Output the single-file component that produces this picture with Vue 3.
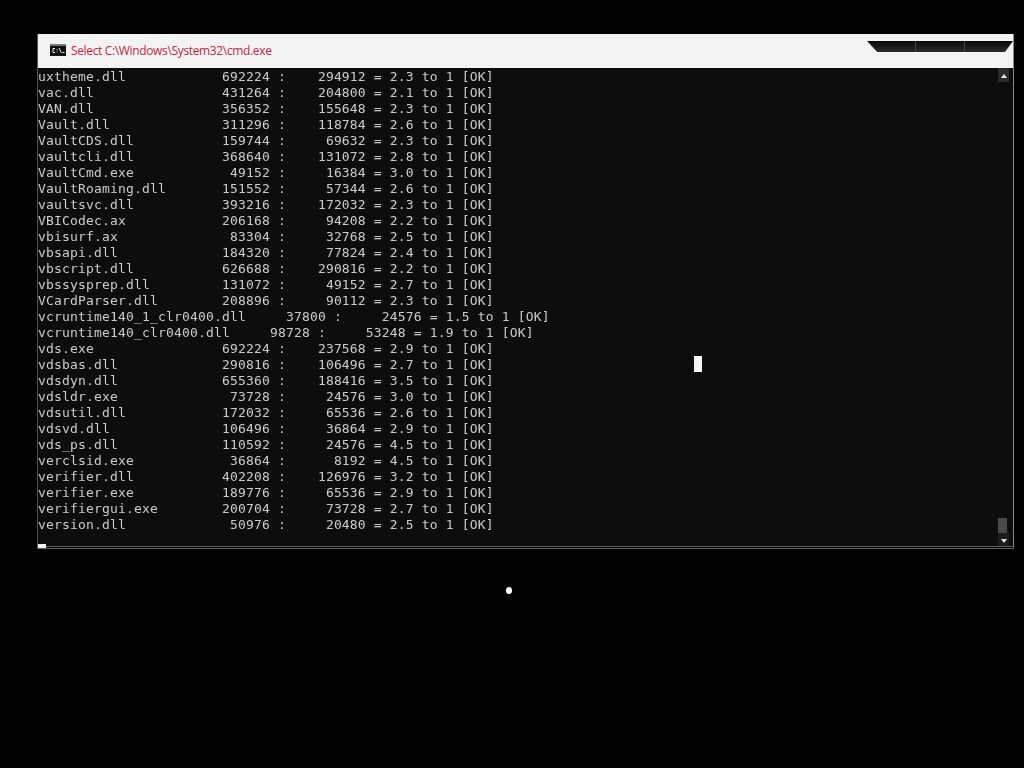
<script setup>
const lines = [
  'uxtheme.dll            692224 :    294912 = 2.3 to 1 [OK]',
  'vac.dll                431264 :    204800 = 2.1 to 1 [OK]',
  'VAN.dll                356352 :    155648 = 2.3 to 1 [OK]',
  'Vault.dll              311296 :    118784 = 2.6 to 1 [OK]',
  'VaultCDS.dll           159744 :     69632 = 2.3 to 1 [OK]',
  'vaultcli.dll           368640 :    131072 = 2.8 to 1 [OK]',
  'VaultCmd.exe            49152 :     16384 = 3.0 to 1 [OK]',
  'VaultRoaming.dll       151552 :     57344 = 2.6 to 1 [OK]',
  'vaultsvc.dll           393216 :    172032 = 2.3 to 1 [OK]',
  'VBICodec.ax            206168 :     94208 = 2.2 to 1 [OK]',
  'vbisurf.ax              83304 :     32768 = 2.5 to 1 [OK]',
  'vbsapi.dll             184320 :     77824 = 2.4 to 1 [OK]',
  'vbscript.dll           626688 :    290816 = 2.2 to 1 [OK]',
  'vbssysprep.dll         131072 :     49152 = 2.7 to 1 [OK]',
  'VCardParser.dll        208896 :     90112 = 2.3 to 1 [OK]',
  'vcruntime140_1_clr0400.dll     37800 :     24576 = 1.5 to 1 [OK]',
  'vcruntime140_clr0400.dll     98728 :     53248 = 1.9 to 1 [OK]',
  'vds.exe                692224 :    237568 = 2.9 to 1 [OK]',
  'vdsbas.dll             290816 :    106496 = 2.7 to 1 [OK]',
  'vdsdyn.dll             655360 :    188416 = 3.5 to 1 [OK]',
  'vdsldr.exe              73728 :     24576 = 3.0 to 1 [OK]',
  'vdsutil.dll            172032 :     65536 = 2.6 to 1 [OK]',
  'vdsvd.dll              106496 :     36864 = 2.9 to 1 [OK]',
  'vds_ps.dll             110592 :     24576 = 4.5 to 1 [OK]',
  'verclsid.exe            36864 :      8192 = 4.5 to 1 [OK]',
  'verifier.dll           402208 :    126976 = 3.2 to 1 [OK]',
  'verifier.exe           189776 :     65536 = 2.9 to 1 [OK]',
  'verifiergui.exe        200704 :     73728 = 2.7 to 1 [OK]',
  'version.dll             50976 :     20480 = 2.5 to 1 [OK]',
]
</script>

<template>
  <div class="screen">
    <section class="window">
      <header class="titlebar">
        <svg class="app-icon" width="16" height="12" viewBox="0 0 16 12">
          <rect width="16" height="12" fill="#111" />
          <rect x="0" y="0" width="16" height="2" fill="#777" />
          <path d="M5 4.5H3v4h2M7 5v.8M7 7.4v.8M9 4l2.5 5M12.5 8.5h2" fill="none" stroke="#eee" stroke-width="1" />
        </svg>
        <span class="title">Select C:\Windows\System32\cmd.exe</span>
        <div class="caption">
          <span class="caption-seam"></span>
          <span class="caption-seam"></span>
        </div>
      </header>
      <div class="body">
        <div class="console">
          <pre v-for="(line, i) in lines" :key="i" class="line">{{ line }}</pre>
          <span class="cursor"></span>
          <span class="selection"></span>
        </div>
        <aside class="scrollbar">
          <svg width="11" height="14" viewBox="0 0 11 14">
            <rect width="11" height="14" fill="#2b2b2b" />
            <path d="M3 10h6L6 6z" fill="#e8e8e8" />
          </svg>
          <span class="track"></span>
          <span class="thumb"></span>
          <svg width="11" height="13" viewBox="0 0 11 13">
            <rect width="11" height="13" fill="#1d1d1d" />
            <path d="M3 6h6L6 10z" fill="#e8e8e8" />
          </svg>
        </aside>
      </div>
    </section>
    <span class="pointer"></span>
  </div>
</template>

<style scoped>
.screen {
  position: relative;
  box-sizing: border-box;
  width: 1024px;
  height: 768px;
  padding: 34px 10px 0 37px;
  background: #000;
}
.window {
  display: flex;
  flex-direction: column;
  height: 515px;
  box-sizing: border-box;
  border-right: 1px solid #8a8a8a;
  border-bottom: 3px double #5e5e5e;
  border-left: 1px solid #555;
}
.titlebar {
  display: flex;
  align-items: center;
  flex: none;
  height: 34px;
  padding: 0 0 0 12px;
  background: #f3f3f3;
}
.app-icon {
  flex: none;
  margin: 0 5px 2px 0;
}
.title {
  margin-bottom: 2px;
  font-family: "Open Sans", sans-serif;
  font-size: 12px;
  letter-spacing: -0.35px;
  color: #c2263f;
  white-space: nowrap;
}
.caption {
  display: flex;
  justify-content: space-evenly;
  align-self: flex-start;
  width: 146px;
  height: 11px;
  margin: 7px 0 0 auto;
  background: linear-gradient(#090909, #2a2a2a);
  clip-path: polygon(0 0, 100% 0, 94.5% 100%, 7% 100%);
}
.caption-seam {
  width: 1px;
  background: #444;
}
.body {
  display: flex;
  flex: 1;
  min-height: 0;
  background: #0d0d0d;
}
.console {
  position: relative;
  flex: 1;
  min-width: 0;
  padding-top: 1px;
  will-change: transform;
}
.line {
  height: 16px;
  margin: 0;
  font-family: "DejaVu Sans Mono", monospace;
  font-size: 13px;
  line-height: 16px;
  letter-spacing: 0.17px;
  color: #cccccc;
}
.cursor {
  position: absolute;
  bottom: -2px;
  left: 0;
  width: 8px;
  height: 4px;
  background: #f2f2f2;
}
.selection {
  position: absolute;
  top: 288px;
  left: 656px;
  width: 8px;
  height: 16px;
  background: #f4f4f4;
}
.scrollbar {
  display: flex;
  flex-direction: column;
  flex: none;
  width: 11px;
  margin-right: 4px;
}
.track {
  flex: 1;
}
.thumb {
  flex: none;
  height: 15px;
  margin-right: 2px;
  background: #4a4a4a;
}
.pointer {
  position: absolute;
  top: 587px;
  left: 506px;
  width: 6px;
  height: 7px;
  border-radius: 50%;
  background: #fff;
}
</style>

<style>
html, body {
  margin: 0;
  background: #000;
}
</style>
